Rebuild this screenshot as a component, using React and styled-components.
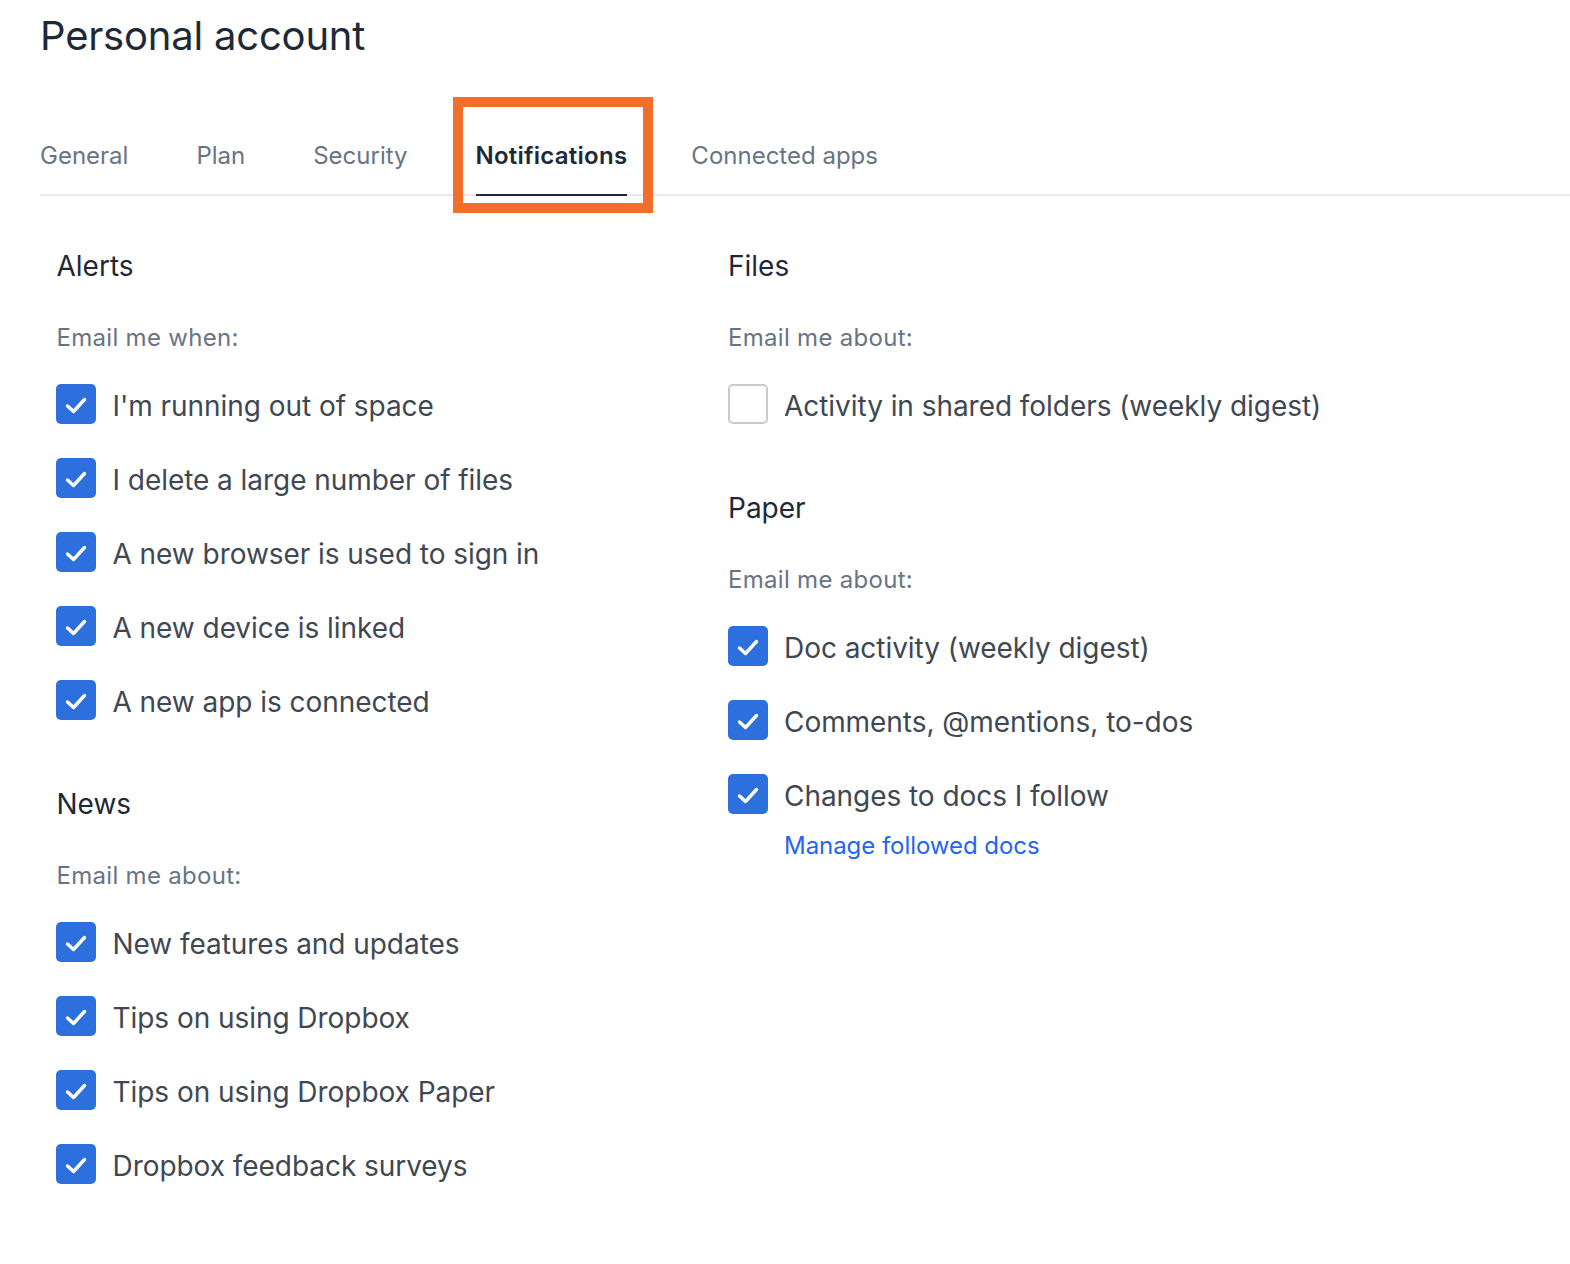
import React from "react";
import styled, { createGlobalStyle } from "styled-components";

const Global = createGlobalStyle`
  html, body {
    margin: 0;
    padding: 0;
    background: #fff;
    overflow: hidden;
  }
  body {
    font-family: Inter, "Liberation Sans", sans-serif;
  }
`;

const Page = styled.div`
  width: 1570px;
  height: 1264px;
  box-sizing: border-box;
  padding: 0 0 0 40px;
`;

const Title = styled.h1`
  margin: 0;
  height: 72px;
  line-height: 72px;
  font-size: 40px;
  font-weight: 400;
  color: #1e2938;
  letter-spacing: -0.2px;
`;

const Tabs = styled.nav`
  display: flex;
  gap: 68px;
  height: 123px;
  margin-top: 1px;
  align-items: flex-end;
  border-bottom: 2px solid #e6e8ec;
  box-sizing: border-box;
`;

const Tab = styled.a`
  position: relative;
  display: block;
  height: 64px;
  line-height: 52px;
  font-size: 24px;
  font-weight: ${(p) => (p.$active ? 600 : 400)};
  letter-spacing: ${(p) => (p.$active ? "0.25px" : "0")};
  color: ${(p) => (p.$active ? "#1e2938" : "#687484")};
  margin-bottom: -2px;
  margin-right: ${(p) => (p.$active ? "-4px" : "0")};
  border-bottom: ${(p) => (p.$active ? "2px solid #1e2938" : "2px solid transparent")};
`;

const Highlight = styled.div`
  position: absolute;
  left: 453px;
  top: 97px;
  width: 200px;
  height: 116px;
  box-sizing: border-box;
  border: 10px solid #f26f2b;
`;

const Columns = styled.div`
  display: flex;
  padding: 0 0 0 16px;
`;

const Column = styled.div`
  width: ${(p) => p.$width}px;
  flex: none;
`;

const Section = styled.section`
  padding-top: ${(p) => p.$top}px;
`;

const Heading = styled.h2`
  margin: 0 0 0 0.5px;
  height: 36px;
  line-height: 36px;
  font-size: 28px;
  font-weight: 400;
  color: #1e2938;
`;

const Lead = styled.p`
  margin: 36px 0 0 0.5px;
  height: 36px;
  line-height: 36px;
  font-size: 24px;
  letter-spacing: 0.3px;
  color: #687484;
`;

const Rows = styled.div`
  margin-top: 28px;
  display: flex;
  flex-direction: column;
  gap: 34px;
`;

const Row = styled.label`
  display: flex;
  align-items: flex-start;
  gap: 16.5px;
  height: 40px;
  line-height: 44px;
  font-size: 28px;
  letter-spacing: -0.05px;
  color: #3f4852;
`;

const Box = styled.span`
  flex: none;
  width: 40px;
  height: 40px;
  box-sizing: border-box;
  border-radius: 5px;
  display: flex;
  align-items: center;
  justify-content: center;
  background: ${(p) => (p.$on ? "#2d6fdc" : "#fff")};
  border: ${(p) => (p.$on ? "none" : "2px solid #c8ccd1")};
`;

const Manage = styled.a`
  display: block;
  margin: 14px 0 0 56.5px;
  font-size: 24px;
  line-height: 36px;
  letter-spacing: -0.05px;
  color: #1f66f0;
`;

const Check = () => (
  <svg width="24" height="24" viewBox="0 0 24 24" fill="none">
    <path d="M3.5 14 L9.5 19.5 L20.5 7.5" stroke="#fff" strokeWidth="3.4" strokeLinecap="round" strokeLinejoin="round" />
  </svg>
);

const Item = ({ on = true, children }) => (
  <Row>
    <Box $on={on}>{on && <Check />}</Box>
    {children}
  </Row>
);

export default function App() {
  return (
    <Page>
      <Global />
      <Title>Personal account</Title>
      <Tabs>
        <Tab>General</Tab>
        <Tab>Plan</Tab>
        <Tab>Security</Tab>
        <Tab $active>Notifications</Tab>
        <Tab>Connected apps</Tab>
      </Tabs>
      <Highlight />
      <Columns>
        <Column $width={671.5}>
          <Section $top={52}>
            <Heading>Alerts</Heading>
            <Lead>Email me when:</Lead>
            <Rows>
              <Item>I'm running out of space</Item>
              <Item>I delete a large number of files</Item>
              <Item>A new browser is used to sign in</Item>
              <Item>A new device is linked</Item>
              <Item>A new app is connected</Item>
            </Rows>
          </Section>
          <Section $top={66}>
            <Heading>News</Heading>
            <Lead>Email me about:</Lead>
            <Rows>
              <Item>New features and updates</Item>
              <Item>Tips on using Dropbox</Item>
              <Item>Tips on using Dropbox Paper</Item>
              <Item>Dropbox feedback surveys</Item>
            </Rows>
          </Section>
        </Column>
        <Column $width={800}>
          <Section $top={52}>
            <Heading>Files</Heading>
            <Lead>Email me about:</Lead>
            <Rows>
              <Item on={false}>Activity in shared folders (weekly digest)</Item>
            </Rows>
          </Section>
          <Section $top={66}>
            <Heading>Paper</Heading>
            <Lead>Email me about:</Lead>
            <Rows>
              <Item>Doc activity (weekly digest)</Item>
              <Item>Comments, @mentions, to-dos</Item>
              <Item>Changes to docs I follow</Item>
            </Rows>
            <Manage>Manage followed docs</Manage>
          </Section>
        </Column>
      </Columns>
    </Page>
  );
}
